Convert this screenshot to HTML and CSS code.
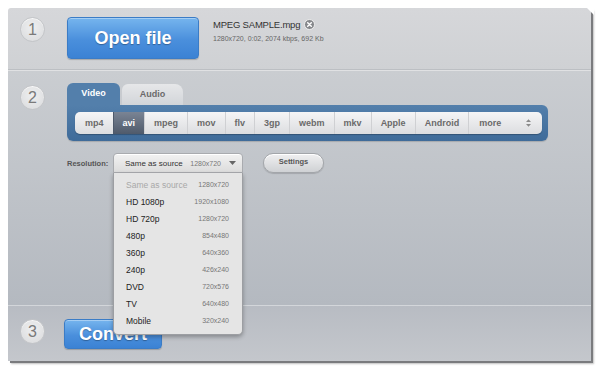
FILE: index.html
```html
<!DOCTYPE html>
<html lang="en">
<head>
    <meta charset="UTF-8">
    <title>Video Converter</title>
    <link rel="stylesheet" href="styles.css">
</head>
<body>
    <div class="converter">
        <section class="step step-open">
            <div class="step-num">1</div>
            <div class="step-body">
                <button class="big-btn open-btn">Open file</button>
                <div class="file-info">
                    <div class="file-name">
                        MPEG SAMPLE.mpg
                        <span class="file-remove">
                            <svg width="11" height="11" viewBox="0 0 11 11">
                                <circle cx="5.5" cy="5.5" r="5" fill="#85878b" stroke="#eeeeee" stroke-width="1"/>
                                <path d="M3.7 3.7 L7.3 7.3 M7.3 3.7 L3.7 7.3" stroke="#fff" stroke-width="1.5" stroke-linecap="round"/>
                            </svg>
                        </span>
                    </div>
                    <div class="file-meta">1280x720, 0:02, 2074 kbps, 692 Kb</div>
                </div>
            </div>
        </section>

        <section class="step step-format">
            <div class="step-num">2</div>
            <div class="step-body">
                <div class="tabs">
                    <div class="tab active">Video</div>
                    <div class="tab">Audio</div>
                </div>
                <div class="format-panel">
                    <ul class="format-bar">
                        <li>mp4</li>
                        <li class="selected">avi</li>
                        <li>mpeg</li>
                        <li>mov</li>
                        <li>flv</li>
                        <li>3gp</li>
                        <li>webm</li>
                        <li>mkv</li>
                        <li>Apple</li>
                        <li>Android</li>
                        <li class="more">
                            more
                            <svg width="7" height="10" viewBox="0 0 7 10">
                                <path d="M1 4 L3.5 1.2 L6 4 Z M1 6 L3.5 8.8 L6 6 Z" fill="#8a8a8a"/>
                            </svg>
                        </li>
                    </ul>
                </div>
                <div class="resolution-row">
                    <span class="res-label">Resolution:</span>
                    <div class="res-select">
                        <div class="res-current">
                            <span class="res-name">Same as source</span>
                            <span class="res-size">1280x720</span>
                            <svg width="7" height="4" viewBox="0 0 7 4">
                                <path d="M0 0 L7 0 L3.5 4 Z" fill="#666"/>
                            </svg>
                        </div>
                        <ul class="res-list">
                            <li class="disabled"><span>Same as source</span><span class="res-size">1280x720</span></li>
                            <li><span>HD 1080p</span><span class="res-size">1920x1080</span></li>
                            <li><span>HD 720p</span><span class="res-size">1280x720</span></li>
                            <li><span>480p</span><span class="res-size">854x480</span></li>
                            <li><span>360p</span><span class="res-size">640x360</span></li>
                            <li><span>240p</span><span class="res-size">426x240</span></li>
                            <li><span>DVD</span><span class="res-size">720x576</span></li>
                            <li><span>TV</span><span class="res-size">640x480</span></li>
                            <li><span>Mobile</span><span class="res-size">320x240</span></li>
                        </ul>
                    </div>
                    <button class="settings-btn">Settings</button>
                </div>
            </div>
        </section>

        <section class="step step-convert">
            <div class="step-num">3</div>
            <div class="step-body">
                <button class="big-btn convert-btn">Convert</button>
            </div>
        </section>
    </div>
</body>
</html>
```

FILE: styles.css
```css
body {
    margin: 0;
    padding: 8px;
    background: #ffffff;
    font-family: 'Liberation Sans', Arial, sans-serif;
}

.converter {
    position: relative;
    width: 583px;
    height: 353px;
    border-radius: 3px 0 0 0;
    box-shadow: 2px 2px 0 #7a7b7e, 3px 3px 2px rgba(0, 0, 0, 0.25);
}

/* folded corner on the top right */
.converter::after {
    content: '';
    position: absolute;
    top: 0;
    right: -3px;
    width: 0;
    height: 0;
    border-style: solid;
    border-width: 0 7px 7px 0;
    border-color: transparent #ffffff transparent transparent;
}

.step {
    display: flex;
    box-sizing: border-box;
}

.step-open {
    height: 62px;
    padding-top: 9px;
    background: linear-gradient(#d6d7da, #cfd1d4);
    border-bottom: 1px solid #bcbfc3;
    border-radius: 3px 0 0 0;
}

.step-format {
    height: 235px;
    padding-top: 12px;
    background: linear-gradient(#cacdd1, #b4b9c0);
    border-top: 1px solid #e0e1e3;
}

.step-format .step-num {
    margin-top: 2px;
}

.step-convert {
    height: 56px;
    padding-top: 13px;
    background: linear-gradient(#b8bcc3, #c4c7cc);
    border-top: 1px solid #d3d6da;
}

.step-num {
    width: 25px;
    height: 25px;
    margin: 0 22px 0 12px;
    border-radius: 50%;
    box-sizing: border-box;
    border: 1px solid #c3c5c8;
    background: radial-gradient(circle at 50% 40%, #eeeff0, #d9dadc);
    box-shadow: inset 0 1px 1px rgba(255, 255, 255, 0.8);
    color: #7a7a7a;
    font-size: 16px;
    line-height: 23px;
    text-align: center;
}

.step-body {
    flex: 1;
    display: flex;
    flex-direction: column;
}

.step-open .step-body {
    flex-direction: row;
}

.big-btn {
    border: 1px solid #3b7cc6;
    border-radius: 4px;
    background: linear-gradient(#76b5ee, #4a8fdc 55%, #3b82d4);
    box-shadow: inset 0 1px 0 rgba(255, 255, 255, 0.35), 0 1px 1px rgba(0, 0, 0, 0.2);
    color: #ffffff;
    font-family: 'Liberation Sans', Arial, sans-serif;
    font-weight: bold;
    font-size: 18px;
    text-shadow: 0 1px 1px rgba(0, 0, 0, 0.3);
    padding: 0;
}

.open-btn {
    width: 132px;
    height: 42px;
}

.convert-btn {
    width: 98px;
    height: 30px;
    margin-left: -3px;
}

.file-info {
    margin-left: 14px;
    padding-top: 2px;
}

.file-name {
    display: flex;
    align-items: center;
    gap: 4px;
    font-size: 9.5px;
    letter-spacing: -0.2px;
    color: #333333;
}

.file-remove {
    display: flex;
}

.file-meta {
    margin-top: 5px;
    font-size: 7px;
    color: #666666;
}

.tabs {
    display: flex;
    align-items: flex-end;
    height: 22px;
}

.tab {
    width: 61px;
    height: 21px;
    margin-left: 2px;
    border-radius: 6px 8px 0 0;
    background: linear-gradient(#e6e7e9, #d2d5d9);
    color: #6a6a6a;
    font-size: 9px;
    font-weight: bold;
    line-height: 21px;
    text-align: center;
}

.tab.active {
    width: 53px;
    height: 22px;
    margin-left: 0;
    border-radius: 6px 6px 0 0;
    background: #537fab;
    color: #ffffff;
}

.format-panel {
    width: 481px;
    box-sizing: border-box;
    padding: 7px 6px 7px 8px;
    border-radius: 0 6px 6px 6px;
    background: linear-gradient(#537fab, #3f6b99);
    box-shadow: 0 1px 1px rgba(0, 0, 0, 0.15);
}

.format-bar {
    display: flex;
    height: 22px;
    margin: 0;
    padding: 0;
    list-style: none;
    border-radius: 5px;
    overflow: hidden;
    background: linear-gradient(#f5f5f6, #dcdde0);
    box-shadow: 0 1px 1px rgba(0, 0, 0, 0.25);
}

.format-bar li {
    padding: 0 9px;
    border-left: 1px solid #cfd0d3;
    color: #6a6a6a;
    font-size: 9px;
    font-weight: bold;
    line-height: 22px;
}

.format-bar li:first-child {
    border-left: none;
    padding-left: 10px;
}

.format-bar li.selected {
    background: linear-gradient(#7a8494, #4f5a6b);
    color: #ffffff;
    border-left-color: #4f5a6b;
}

.format-bar li.more {
    flex: 1;
    display: flex;
    align-items: center;
    justify-content: space-between;
    padding: 0 10px;
}

.resolution-row {
    display: flex;
    align-items: center;
    margin-top: 12px;
}

.res-label {
    width: 46px;
    color: #555555;
    font-size: 7.5px;
    font-weight: bold;
}

.res-select {
    position: relative;
    width: 130px;
}

.res-current {
    display: flex;
    align-items: center;
    height: 20px;
    box-sizing: border-box;
    padding: 0 6px 0 11px;
    border: 1px solid #a9abaf;
    border-radius: 4px 4px 0 0;
    background: linear-gradient(#f2f2f2, #dcdcdc);
    box-shadow: inset 0 1px 0 #ffffff;
    font-size: 8px;
    color: #333333;
}

.res-name {
    flex: 1;
}

.res-current .res-size {
    margin-right: 8px;
}

.res-size {
    font-size: 7px;
    color: #777777;
}

.res-list {
    position: absolute;
    top: 100%;
    left: 0;
    z-index: 2;
    width: 130px;
    box-sizing: border-box;
    margin: 0;
    padding: 3px 0 5px;
    list-style: none;
    background: #e5e5e5;
    border: 1px solid #9c9ea2;
    border-top: none;
    border-radius: 0 0 5px 5px;
    box-shadow: 0 2px 4px rgba(0, 0, 0, 0.3);
}

.res-list li {
    display: flex;
    justify-content: space-between;
    align-items: center;
    height: 17px;
    padding: 0 13px 0 12px;
    font-size: 8.5px;
    color: #222222;
}

.res-list li.disabled {
    color: #a8a8a8;
}

.settings-btn {
    width: 61px;
    height: 20px;
    margin-left: 20px;
    padding: 0 0 3px;
    border: 1px solid #a3a6aa;
    border-radius: 10px;
    background: linear-gradient(#f0f0f1, #cfd1d4);
    box-shadow: inset 0 1px 0 #ffffff, 0 1px 1px rgba(0, 0, 0, 0.15);
    color: #555555;
    font-family: 'Liberation Sans', Arial, sans-serif;
    font-size: 7.5px;
    font-weight: bold;
}
```
